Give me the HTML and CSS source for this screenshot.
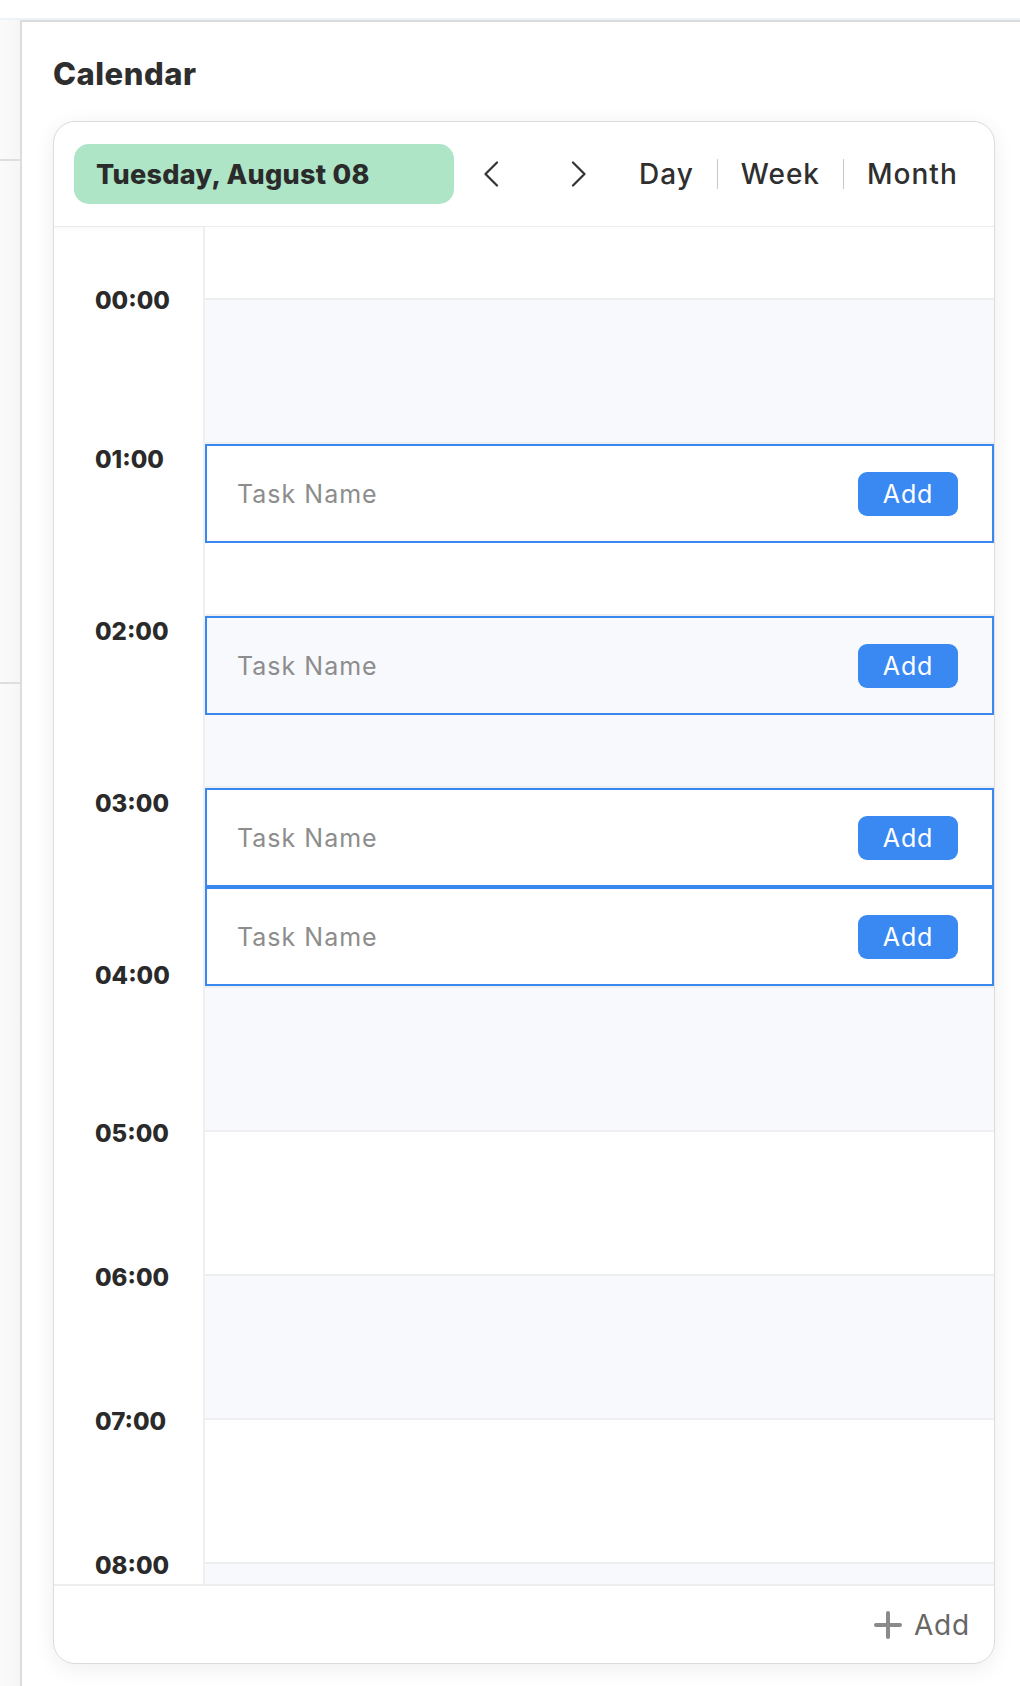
FILE: index.html
```html
<!DOCTYPE html>
<html lang="en">
<head>
<meta charset="utf-8">
<title>Calendar</title>
<link rel="stylesheet" href="styles.css">
</head>
<body>
<div class="topbar"></div>
<div class="layout">
  <aside class="side">
    <div class="side-block first"></div>
    <div class="side-block second"></div>
  </aside>
  <main class="panel">
    <h1 class="title">Calendar</h1>
    <section class="card">
      <header class="card-head">
        <div class="date-pill">Tuesday, August 08</div>
        <button class="nav-btn prev" aria-label="Previous">
          <svg width="16" height="26" viewBox="0 0 16 26"><polyline points="14,1.5 2.5,13 14,24.5" fill="none" stroke="#333" stroke-width="2.2" stroke-linecap="round" stroke-linejoin="round"/></svg>
        </button>
        <button class="nav-btn next" aria-label="Next">
          <svg width="16" height="26" viewBox="0 0 16 26"><polyline points="2,1.5 13.5,13 2,24.5" fill="none" stroke="#333" stroke-width="2.2" stroke-linecap="round" stroke-linejoin="round"/></svg>
        </button>
        <nav class="views">
          <span class="view">Day</span>
          <span class="sep"></span>
          <span class="view">Week</span>
          <span class="sep"></span>
          <span class="view">Month</span>
        </nav>
      </header>
      <div class="card-body">
        <div class="times">
          <div class="time first">00:00</div>
          <div class="time tall">01:00</div>
          <div class="time tall">02:00</div>
          <div class="time tall">03:00</div>
          <div class="time tall">04:00</div>
          <div class="time">05:00</div>
          <div class="time">06:00</div>
          <div class="time">07:00</div>
          <div class="time">08:00</div>
        </div>
        <div class="slots">
          <div class="slot pre"></div>
          <div class="slot alt"></div>
          <div class="slot with-task">
            <div class="task"><span class="task-name">Task Name</span><button class="add-btn">Add</button></div>
          </div>
          <div class="slot alt with-task">
            <div class="task"><span class="task-name">Task Name</span><button class="add-btn">Add</button></div>
          </div>
          <div class="slot double">
            <div class="task"><span class="task-name">Task Name</span><button class="add-btn">Add</button></div>
            <div class="task"><span class="task-name">Task Name</span><button class="add-btn">Add</button></div>
          </div>
          <div class="slot alt"></div>
          <div class="slot"></div>
          <div class="slot alt"></div>
          <div class="slot"></div>
          <div class="slot alt"></div>
        </div>
      </div>
      <footer class="card-foot">
        <button class="foot-add">
          <svg width="28" height="28" viewBox="0 0 28 28"><path d="M14 2v24M2 14h24" stroke="#8a8a8a" stroke-width="4" stroke-linecap="round"/></svg>
          <span>Add</span>
        </button>
      </footer>
    </section>
  </main>
</div>
</body>
</html>
```
FILE: styles.css
```css
* { box-sizing: border-box; }
html, body { margin: 0; padding: 0; background: #fff; }
body {
  font-family: Inter, "Noto Sans", "DejaVu Sans", sans-serif;
  color: #2d2d2d;
  width: 1020px;
  height: 1686px;
  overflow: hidden;
}
button { font-family: inherit; border: 0; background: none; padding: 0; margin: 0; cursor: pointer; }

.topbar {
  height: 20px;
  border-bottom: 2px solid #edf4f9;
}
.layout {
  display: flex;
  height: 1666px;
}
.side {
  width: 20px;
  background: linear-gradient(90deg, #fbfbfb, #f6f6f6);
}
.side-block { border-bottom: 2px solid #dedede; }
.side-block.first { height: 141px; }
.side-block.second { height: 523px; }

.panel {
  flex: 1;
  border-left: 2px solid #dcdcdc;
  border-top: 2px solid #dcdcdc;
  padding: 0 25px 0 31px;
  background: #fff;
}
.title {
  margin: 34px 0 0;
  font-size: 31px;
  line-height: 36px;
  font-weight: 800;
  letter-spacing: 0.5px;
  color: #2e2e2e;
}
.card {
  margin-top: 29px;
  width: 942px;
  border: 1px solid #dcdcdc;
  border-radius: 22px;
  overflow: hidden;
  box-shadow: 0 4px 22px rgba(0, 0, 0, 0.07);
  background: #fff;
}
.card-head {
  display: flex;
  align-items: center;
  padding: 22px 20px;
  border-bottom: 1px solid #ececec;
  box-shadow: 0 2px 4px rgba(0,0,0,0.03);
}
.date-pill {
  width: 380px;
  height: 60px;
  border-radius: 15px;
  background: #ade5c6;
  display: flex;
  align-items: center;
  padding-left: 22px;
  font-size: 27px;
  font-weight: 800;
  letter-spacing: 0.3px;
  color: #2b2b2b;
}
.nav-btn { display: flex; align-items: center; }
.nav-btn.prev { margin-left: 29px; }
.nav-btn.next { margin-left: 72px; }
.views {
  display: flex;
  align-items: center;
  margin-left: 52px;
  gap: 23px;
  font-size: 28px;
  font-weight: 500;
  color: #2f2f2f;
  letter-spacing: 1px;
}
.sep {
  width: 1px;
  height: 30px;
  background: #c9c9c9;
}

.card-body {
  display: flex;
  height: 1357px;
  overflow: hidden;
}
.times {
  width: 151px;
  flex: none;
  border-right: 2px solid #efefef;
  display: flex;
  flex-direction: column;
}
.time {
  flex: none;
  height: 144px;
  display: flex;
  align-items: center;
  padding-left: 41px;
  font-size: 24px;
  font-weight: 800;
  letter-spacing: 0;
  color: #2a2a2a;
}
.time.first { height: 146px; }
.time.tall { height: 172px; }

.slots {
  flex: 1;
  display: flex;
  flex-direction: column;
}
.slot {
  flex: none;
  height: 144px;
  border-bottom: 2px solid #efefef;
  background: #fff;
}
.slot.alt { background: #f8f9fd; }
.slot.pre { height: 73px; }
.slot.with-task { height: 172px; }
.slot.double { height: 200px; }

.task {
  height: 99px;
  border: 2px solid #3a87f0;
  display: flex;
  align-items: center;
  justify-content: space-between;
  padding: 0 34px 0 30px;
}
.task-name {
  font-size: 25px;
  color: #8d8d8d;
  letter-spacing: 1px;
}
.add-btn {
  width: 100px;
  height: 44px;
  border-radius: 9px;
  background: #3a89f3;
  color: #fff;
  font-size: 25px;
  letter-spacing: 0.8px;
}

.card-foot {
  height: 79px;
  border-top: 2px solid #eeeeee;
  display: flex;
  align-items: center;
  justify-content: flex-end;
  padding-right: 24px;
}
.foot-add {
  display: flex;
  align-items: center;
  gap: 12px;
  font-size: 28px;
  color: #666;
  letter-spacing: 0.8px;
}
```
